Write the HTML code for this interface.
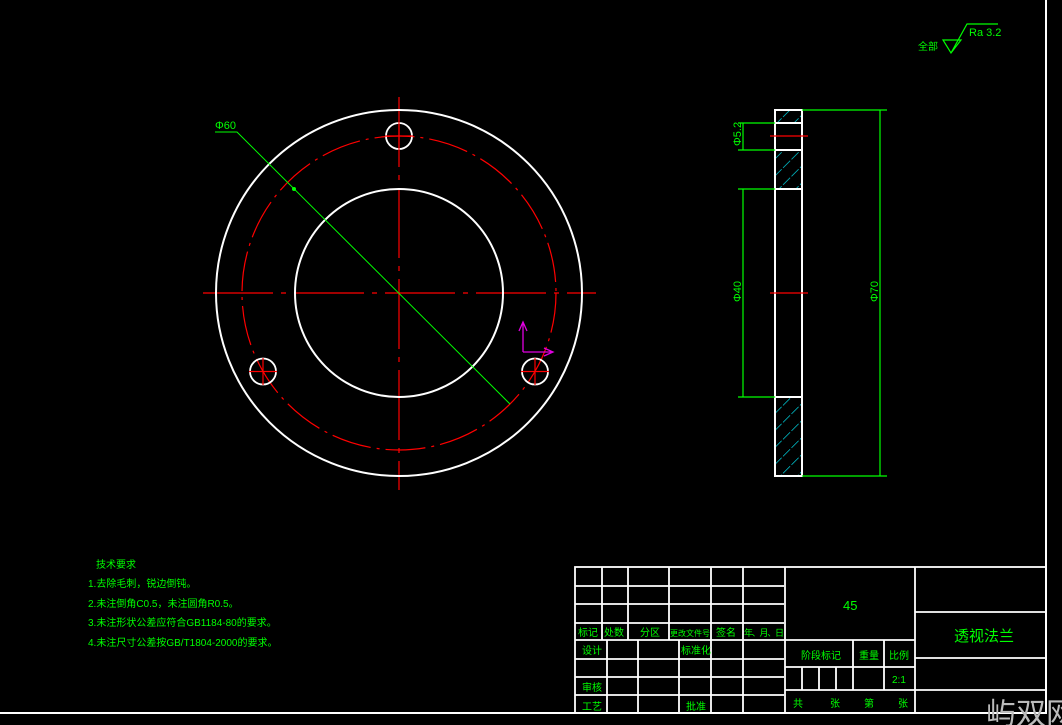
<!DOCTYPE html>
<html><head><meta charset="utf-8"><style>
html,body{margin:0;padding:0;background:#000;width:1062px;height:725px;overflow:hidden}
svg{display:block}
text{font-family:"Liberation Sans","WenQuanYi Zen Hei","Noto Sans CJK SC",sans-serif;fill:#00ff00}
</style></head><body>
<svg width="1062" height="725" viewBox="0 0 1062 725" xmlns="http://www.w3.org/2000/svg">
<defs>
<pattern id="h" patternUnits="userSpaceOnUse" width="12" height="12" patternTransform="rotate(45)">
<line x1="0" y1="0" x2="0" y2="12" stroke="#00f0ff" stroke-width="1.3" stroke-dasharray="9 2"/>
</pattern>
</defs>
<line x1="1046" y1="0" x2="1046" y2="714" stroke="#fff" stroke-width="2"/>
<line x1="0" y1="713" x2="1047" y2="713" stroke="#fff" stroke-width="2"/>

<g fill="none">
<line x1="203" y1="293" x2="596" y2="293" stroke="#f00" stroke-width="1.2" stroke-dasharray="70 8 5 8"/>
<line x1="399" y1="97" x2="399" y2="490" stroke="#f00" stroke-width="1.2" stroke-dasharray="70 8 5 8"/>
<circle cx="399" cy="293" r="157" stroke="#f00" stroke-width="1.2" stroke-dasharray="40 6 3 6"/>
<circle cx="399" cy="293" r="183" stroke="#fff" stroke-width="2"/>
<circle cx="399" cy="293" r="104" stroke="#fff" stroke-width="2"/>
<circle cx="399" cy="136" r="13" stroke="#fff" stroke-width="1.8"/>
<circle cx="263" cy="371.5" r="13" stroke="#fff" stroke-width="1.8"/>
<circle cx="535" cy="371.5" r="13" stroke="#fff" stroke-width="1.8"/>
<g stroke="#f00" stroke-width="1.2">
<line x1="385" y1="136" x2="413" y2="136"/><line x1="399" y1="122" x2="399" y2="150"/>
<line x1="249" y1="371.5" x2="277" y2="371.5"/><line x1="263" y1="358" x2="263" y2="385"/>
<line x1="521" y1="371.5" x2="549" y2="371.5"/><line x1="535" y1="358" x2="535" y2="385"/>
</g>
<path d="M215 132 H237 L510 404" stroke="#00ff00" stroke-width="1"/>
<circle cx="294" cy="189" r="2" fill="#00ff00"/>
<path d="M523 352 V322 M519 331 L523 322 L527 331 M523 352 H553 M544 348 L553 352 L544 356" stroke="#e000e0" stroke-width="1.3"/>
</g>
<text x="215" y="129" font-size="11">Φ60</text>

<rect x="776" y="110" width="25" height="13" fill="url(#h)"/>
<rect x="776" y="150" width="25" height="39" fill="url(#h)"/>
<rect x="776" y="397" width="25" height="79" fill="url(#h)"/>
<g stroke="#fff" stroke-width="2" fill="none">
<rect x="775" y="110" width="27" height="366"/>
<line x1="775" y1="123" x2="802" y2="123"/>
<line x1="775" y1="150" x2="802" y2="150"/>
<line x1="775" y1="189" x2="802" y2="189"/>
<line x1="775" y1="397" x2="802" y2="397"/>
</g>
<g stroke="#f00" stroke-width="1.2">
<line x1="770" y1="136" x2="808" y2="136"/>
<line x1="770" y1="293" x2="808" y2="293"/>
</g>
<g stroke="#00ff00" stroke-width="1.2" fill="none">
<line x1="802" y1="110" x2="887" y2="110"/>
<line x1="802" y1="476" x2="887" y2="476"/>
<line x1="880" y1="110" x2="880" y2="476"/>
<line x1="738" y1="123" x2="775" y2="123"/>
<line x1="738" y1="150" x2="775" y2="150"/>
<line x1="743" y1="123" x2="743" y2="150"/>
<line x1="738" y1="189" x2="775" y2="189"/>
<line x1="738" y1="397" x2="775" y2="397"/>
<line x1="743" y1="189" x2="743" y2="397"/>
</g>
<text font-size="11" transform="translate(741,146) rotate(-90)">Φ5.2</text>
<text font-size="11" transform="translate(741,302) rotate(-90)">Φ40</text>
<text font-size="11" transform="translate(878,302) rotate(-90)">Φ70</text>

<text x="918" y="50" font-size="10">全部</text>
<path d="M943 40 H961 L951 53 Z M951 53 L967 24 H998" stroke="#00ff00" stroke-width="1.2" fill="none"/>
<text x="969" y="36" font-size="11">Ra 3.2</text>

<g font-size="10">
<text x="96" y="568">技术要求</text>
<text x="88" y="587">1.去除毛刺，锐边倒钝。</text>
<text x="88" y="607">2.未注倒角C0.5，未注圆角R0.5。</text>
<text x="88" y="626">3.未注形状公差应符合GB1184-80的要求。</text>
<text x="88" y="646">4.未注尺寸公差按GB/T1804-2000的要求。</text>
</g>

<g stroke="#fff" stroke-width="1.8" fill="none">
<rect x="575" y="567" width="471" height="146"/>
<line x1="575" y1="586" x2="784" y2="586"/>
<line x1="575" y1="604" x2="784" y2="604"/>
<line x1="575" y1="623" x2="784" y2="623"/>
<line x1="575" y1="640" x2="915" y2="640"/>
<line x1="575" y1="659" x2="784" y2="659"/>
<line x1="575" y1="677" x2="784" y2="677"/>
<line x1="575" y1="695" x2="784" y2="695"/>
<line x1="602" y1="567" x2="602" y2="640"/>
<line x1="628" y1="567" x2="628" y2="640"/>
<line x1="669" y1="567" x2="669" y2="640"/>
<line x1="711" y1="567" x2="711" y2="713"/>
<line x1="743" y1="567" x2="743" y2="713"/>
<line x1="607" y1="640" x2="607" y2="713"/>
<line x1="638" y1="640" x2="638" y2="713"/>
<line x1="679" y1="640" x2="679" y2="713"/>
<line x1="785" y1="567" x2="785" y2="713"/>
<line x1="915" y1="567" x2="915" y2="713"/>
<line x1="785" y1="667" x2="915" y2="667"/>
<line x1="785" y1="690" x2="1046" y2="690"/>
<line x1="853" y1="640" x2="853" y2="690"/>
<line x1="884" y1="640" x2="884" y2="690"/>
<line x1="802" y1="667" x2="802" y2="690"/>
<line x1="819" y1="667" x2="819" y2="690"/>
<line x1="836" y1="667" x2="836" y2="690"/>
<line x1="915" y1="612" x2="1046" y2="612"/>
<line x1="915" y1="658" x2="1046" y2="658"/>
</g>
<g font-size="10">
<text x="578" y="636">标记</text><text x="604" y="636">处数</text><text x="640" y="636">分区</text>
<text x="670" y="636" font-size="8" textLength="40">更改文件号</text><text x="716" y="636">签名</text><text x="744" y="636" font-size="9" textLength="40">年、月、日</text>
<text x="582" y="654">设计</text><text x="681" y="654">标准化</text>
<text x="582" y="691">审核</text><text x="582" y="710">工艺</text><text x="686" y="710">批准</text>
<text x="801" y="659">阶段标记</text><text x="859" y="659">重量</text><text x="889" y="659">比例</text>
<text x="892" y="683">2:1</text>
<text x="793" y="707">共</text><text x="830" y="707">张</text><text x="864" y="707">第</text><text x="898" y="707">张</text>
</g>
<text x="843" y="610" font-size="13">45</text>
<text x="954" y="641" font-size="15">透视法兰</text>
<text x="986" y="724" font-size="30" style="fill:#bbb">屿双网</text>
</svg>
</body></html>
